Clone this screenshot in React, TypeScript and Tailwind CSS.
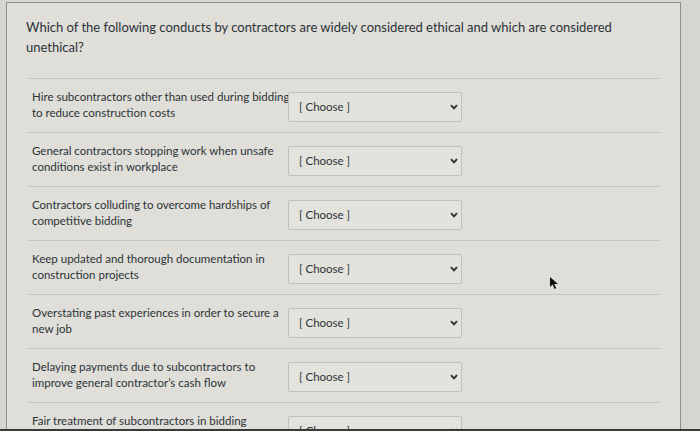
import React from "react";

const rows = [
  ["Hire subcontractors other than used during bidding", "to reduce construction costs"],
  ["General contractors stopping work when unsafe", "conditions exist in workplace"],
  ["Contractors colluding to overcome hardships of", "competitive bidding"],
  ["Keep updated and thorough documentation in", "construction projects"],
  ["Overstating past experiences in order to secure a", "new job"],
  ["Delaying payments due to subcontractors to", "improve general contractor\u2019s cash flow"],
  ["Fair treatment of subcontractors in bidding", ""],
];

function Chevron() {
  return (
    <svg width="8" height="6" viewBox="0 0 8 6" className="shrink-0">
      <path d="M1 1.2 L4 4.4 L7 1.2" fill="none" stroke="#2a2f33" strokeWidth="1.8" />
    </svg>
  );
}

export default function App() {
  return (
    <div
      className="relative w-[700px] h-[431px] overflow-hidden bg-[#d6d5cf]"
      style={{ fontFamily: "Lato, 'Open Sans', sans-serif" }}
    >
      <div className="ml-[6px] mt-[2px] w-[675px] h-[440px] border-l border-t border-r border-[#8f8f8b] bg-[#dfded8]">
        <div className="pl-[19px] pr-[40px] pt-[14px] pb-[21px] text-[13px] leading-[20px] text-[#2c3338]">
          Which of the following conducts by contractors are widely considered ethical and which are considered
          <br />
          unethical?
        </div>
        <div className="ml-[21px] mr-[20px] border-t border-[#c6c5bf]">
          {rows.map((r, i) => (
            <div key={i} className="flex items-start h-[54px] border-b border-[#c6c5bf]">
              <div className="w-[258px] pl-[4px] pt-[10px] text-[11.5px] leading-[16px] text-[#2c3338] whitespace-nowrap">
                <div>{r[0]}</div>
                {r[1] && <div>{r[1]}</div>}
              </div>
              <div className="ml-[2px] mt-[13px] w-[174px] h-[30px] flex items-center justify-between pl-[10px] pr-[3px] rounded-[2px] border border-[#c2c1bb] bg-[#e3e2dc] text-[11.5px] text-[#2c3338]">
                <span>[ Choose ]</span>
                <Chevron />
              </div>
            </div>
          ))}
        </div>
      </div>
      <svg className="absolute left-[549px] top-[276px]" width="12" height="14" viewBox="0 0 12 14">
        <path d="M1 1 L1 11 L3.6 8.6 L5.6 13 L7.2 12.3 L5.3 8 L9 8 Z" fill="#111" />
      </svg>
      <div className="absolute left-0 right-0 bottom-0 h-[2px] bg-[#3a3a3a]" />
    </div>
  );
}
